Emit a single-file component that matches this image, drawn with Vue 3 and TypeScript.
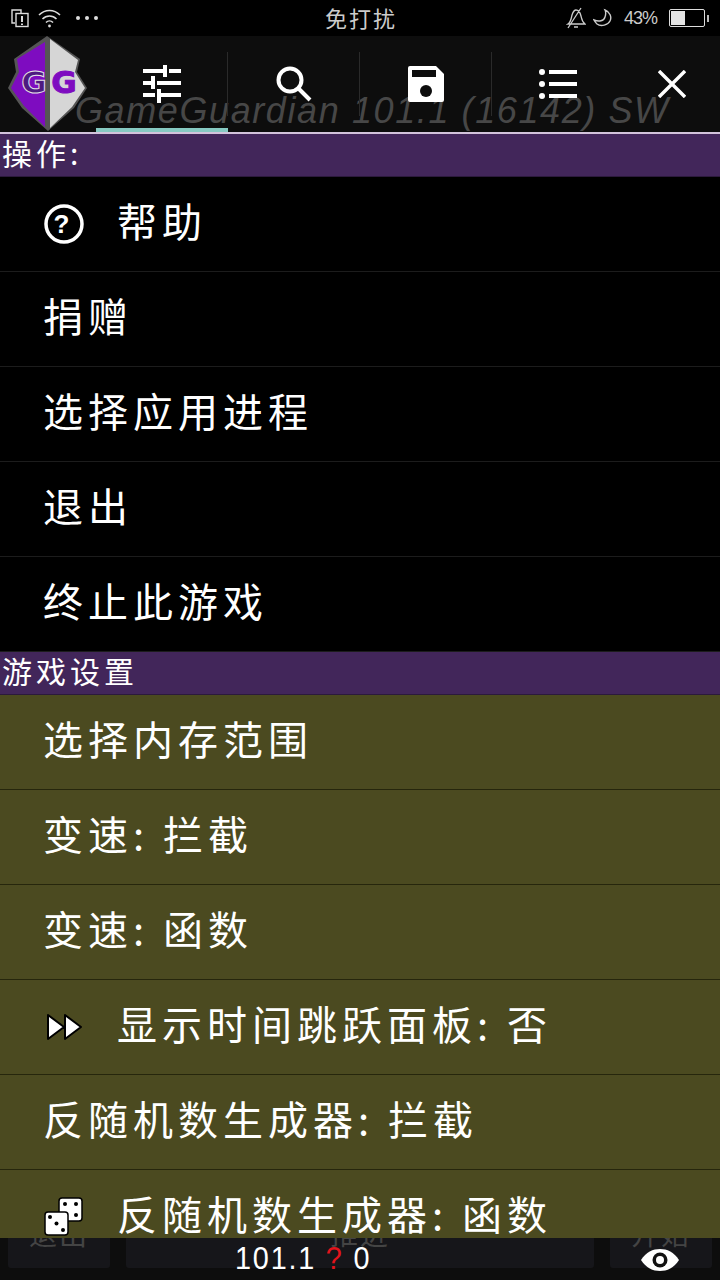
<script setup lang="ts">
interface MenuRow {
  label: string
  icon?: 'help' | 'skip' | 'dice'
}

const actions: MenuRow[] = [
  { label: '帮助', icon: 'help' },
  { label: '捐赠' },
  { label: '选择应用进程' },
  { label: '退出' },
  { label: '终止此游戏' }
]

const settings: MenuRow[] = [
  { label: '选择内存范围' },
  { label: '变速: 拦截' },
  { label: '变速: 函数' },
  { label: '显示时间跳跃面板: 否', icon: 'skip' },
  { label: '反随机数生成器: 拦截' },
  { label: '反随机数生成器: 函数', icon: 'dice' }
]
</script>

<template>
  <div class="screen">
    <!-- status bar -->
    <div class="status">
      <div class="status-left">
        <svg width="20" height="20" viewBox="0 0 20 20" fill="none" stroke="#ddd" stroke-width="1.4">
          <path d="M5 15H2V2h9v3" />
          <rect x="6" y="5.5" width="12" height="13" />
          <path d="M12 8v6M12 15.5v1.6" stroke-width="2" />
        </svg>
        <svg width="25" height="20" viewBox="0 0 25 20" fill="none" stroke="#ddd" stroke-width="1.6">
          <path d="M1 7c6-6 15-6 21 0M4.500 11c4-4 10-4 14 0M8 14.500c2-2 5-2 7 0" />
          <circle cx="11.500" cy="18" r="1.400" fill="#ddd" stroke="none" />
        </svg>
        <span class="dots"><i></i><i></i><i></i></span>
      </div>
      <div class="status-title">免打扰</div>
      <div class="status-right">
        <svg width="20" height="22" viewBox="0 0 20 22" fill="none" stroke="#ccc" stroke-width="1.3">
          <path d="M2 17c3-2 3-5 4-9 1-3 2-5 4-5s4 2 5 6 1 6 4 8zM8 20h4M2 21 15 1" />
        </svg>
        <svg width="20" height="20" viewBox="0 0 20 20" fill="none" stroke="#ccc" stroke-width="1.4">
          <path d="M12 2c5 2 7 7 5 11-2 4-9 6-13 3-1-1-2-2-3-4 5 2 10 1 11-3 1-3 1-5 0-7z" />
        </svg>
        <span class="pct">43%</span>
        <div class="battery"><span class="battery-level"></span></div>
        <span class="battery-tip"></span>
      </div>
    </div>

    <!-- toolbar -->
    <div class="toolbar">
      <div class="watermark">GameGuardian 101.1 (16142) SW</div>
      <div class="logo">
        <svg width="96" height="96" viewBox="0 0 96 96">
          <path d="M47 0 80 23 77 36 87 52 74 72 48 95 22 72 8 52 16 36 14 23z" fill="#555" />
          <path d="M45 6V91L24 70 11 52 19 36 17 23z" fill="#7e0cc0" />
          <path d="M50 3 78 24 75 36 85 52 72 71 50 92z" fill="#d6d6d6" />
          <text x="34" y="57" class="logo-g g-left">G</text>
          <text x="64" y="57" class="logo-g g-right">G</text>
        </svg>
      </div>
      <div class="tab active">
        <svg width="38" height="38" viewBox="0 0 38 38" fill="#fff">
          <path d="M0 4h20v4H0zM26 4h12v4H26zM24 0v12h-4V0zM0 16h8v4H0zM14 16h24v4H14zM12 11v13H8V11zM0 28h12v4H0zM16 28h22v4H16zM18 24v14h-4V24z" />
        </svg>
      </div>
      <div class="tab">
        <svg width="38" height="38" viewBox="0 0 38 38" fill="none" stroke="#fff" stroke-width="4">
          <circle cx="15" cy="15" r="11.500" />
          <path d="M23.500 23.500 35 35" />
        </svg>
      </div>
      <div class="tab">
        <svg width="38" height="38" viewBox="0 0 38 38">
          <path d="M3 1h26l8 8v26a2 2 0 0 1-2 2H3a2 2 0 0 1-2-2V3a2 2 0 0 1 2-2z" fill="#fff" />
          <rect x="5" y="5" width="24" height="7" fill="#0d0d0d" />
          <circle cx="19" cy="26" r="6" fill="#0d0d0d" />
        </svg>
      </div>
      <div class="tab">
        <svg width="38" height="32" viewBox="0 0 38 32" fill="#fff">
          <circle cx="3" cy="4" r="3" /><circle cx="3" cy="16" r="3" /><circle cx="3" cy="28" r="3" />
          <rect x="10" y="2" width="28" height="4" /><rect x="10" y="14" width="28" height="4" /><rect x="10" y="26" width="28" height="4" />
        </svg>
      </div>
      <div class="tab last">
        <svg width="28" height="28" viewBox="0 0 28 28" stroke="#fff" stroke-width="3.400" fill="none">
          <path d="M1 1 27 27M27 1 1 27" />
        </svg>
      </div>
    </div>

    <!-- menu -->
    <div class="content">
      <div class="section">操作:</div>
      <div v-for="row in actions" :key="row.label" class="row">
        <svg v-if="row.icon === 'help'" class="row-icon" width="40" height="40" viewBox="0 0 40 40">
          <circle cx="20" cy="20" r="18" fill="none" stroke="#fff" stroke-width="3.500" />
          <text x="20" y="29" class="help-mark">?</text>
        </svg>
        <span class="row-label">{{ row.label }}</span>
      </div>

      <div class="section">游戏设置</div>
      <div v-for="row in settings" :key="row.label" class="row olive">
        <svg v-if="row.icon === 'skip'" class="row-icon" width="40" height="30" viewBox="0 0 40 30">
          <path d="M4 3 20 15 4 27zM21 3 37 15 21 27z" fill="#fff" stroke="#000" stroke-width="2" stroke-linejoin="round" />
        </svg>
        <svg v-else-if="row.icon === 'dice'" class="row-icon" width="40" height="40" viewBox="0 0 40 40">
          <rect x="15" y="1" width="23" height="23" rx="3" fill="#fff" stroke="#000" stroke-width="1.500" />
          <circle cx="21" cy="7" r="2" /><circle cx="32" cy="7" r="2" /><circle cx="32" cy="18" r="2" />
          <rect x="1" y="15" width="23" height="23" rx="3" fill="#fff" stroke="#000" stroke-width="1.500" />
          <circle cx="6" cy="20" r="2" /><circle cx="12.500" cy="26.500" r="2" /><circle cx="19" cy="33" r="2" />
        </svg>
        <span class="row-label">{{ row.label }}</span>
      </div>
    </div>

    <!-- bottom bar, the menu panel covers the upper part of the buttons -->
    <div class="bottom">
      <div class="bottom-btn side"><span class="btn-label">退出</span></div>
      <div class="bottom-btn middle">
        <span class="btn-label">推进</span>
        <div class="speed">101.1 <b>?</b> 0</div>
      </div>
      <div class="bottom-btn side">
        <span class="btn-label">开始</span>
        <svg class="eye" width="38" height="24" viewBox="0 0 38 24">
          <path d="M0 12C5 4 12 1 19 1s14 3 19 11c-5 8-12 11-19 11S5 20 0 12z" fill="#fff" />
          <circle cx="19" cy="12" r="7.500" fill="#111" />
          <circle cx="19" cy="12" r="4" fill="#fff" />
        </svg>
      </div>
    </div>
  </div>
</template>

<style scoped>
.screen {
  width: 720px;
  height: 1280px;
  display: flex;
  flex-direction: column;
  overflow: hidden;
  background: #000;
  color: #fff;
  font-family: "Noto Sans CJK SC", "Noto Sans", sans-serif;
}

.status {
  height: 36px;
  flex: none;
  display: flex;
  align-items: center;
  justify-content: space-between;
  padding: 0 11px 0 10px;
  position: relative;
}

.status-left {
  display: flex;
  align-items: center;
  gap: 8px;
}

.dots {
  display: flex;
  gap: 5px;
  margin-left: 5px;
}

.dots i {
  width: 4px;
  height: 4px;
  border-radius: 50%;
  background: #ddd;
}

.status-title {
  position: absolute;
  left: 325px;
  top: 0;
  line-height: 34px;
  font-size: 22px;
  letter-spacing: 2px;
  color: #ccc;
}

.status-right {
  display: flex;
  align-items: center;
  gap: 7px;
}

.pct {
  font-size: 18px;
  letter-spacing: -1px;
  color: #ccc;
  font-family: "Liberation Sans", sans-serif;
  margin: 0 5px 0 4px;
}

.battery {
  width: 36px;
  height: 18px;
  border: 1px solid #ddd;
  border-radius: 2px;
  padding: 1px;
  box-sizing: border-box;
}

.battery-level {
  display: block;
  width: 14px;
  height: 14px;
  background: #e4e4e4;
}

.battery-tip {
  width: 2px;
  height: 7px;
  margin-left: -5px;
  background: #bbb;
}

.toolbar {
  height: 96px;
  flex: none;
  display: flex;
  background: #0d0d0d;
  position: relative;
}

.watermark {
  position: absolute;
  left: 75px;
  top: 54px;
  font-family: "Liberation Sans", sans-serif;
  font-style: italic;
  font-size: 36px;
  line-height: 42px;
  letter-spacing: 1.600px;
  white-space: nowrap;
  color: #474747;
}

.logo {
  width: 96px;
  flex: none;
  position: relative;
}

.logo-g {
  font-family: "DejaVu Sans", sans-serif;
  font-weight: 700;
  font-size: 31px;
  text-anchor: middle;
  stroke-width: 1px;
}

.g-left {
  fill: #4d1a80;
  stroke: #e4e4e4;
}

.g-right {
  fill: #7e0cc0;
  stroke: #7e0cc0;
}

.tab {
  width: 132px;
  flex: none;
  height: 96px;
  box-sizing: border-box;
  display: flex;
  align-items: center;
  justify-content: center;
  position: relative;
}

.tab::after {
  content: "";
  position: absolute;
  right: 0;
  top: 16px;
  height: 64px;
  width: 1px;
  background: #2a2a2a;
}

.tab.last {
  width: 96px;
}

.tab:nth-last-child(2)::after,
.tab.last::after {
  display: none;
}

.tab.active {
  border-bottom: 4px solid #86c9c2;
  padding-top: 4px;
}

.content {
  flex: 1;
  min-height: 0;
  overflow: hidden;
  border-top: 2px solid #d3c3dc;
}

.section {
  height: 42px;
  line-height: 37px;
  padding-left: 2px;
  font-size: 30px;
  letter-spacing: 4px;
  background: #42265a;
  border-bottom: 1px solid #2c1a3c;
}

.row {
  height: 94px;
  display: flex;
  align-items: center;
  gap: 33px;
  padding-left: 43px;
  font-size: 40px;
  letter-spacing: 5px;
  background: #000;
  border-bottom: 1px solid #1c1c1c;
}

.row.olive {
  background: #4b4a20;
  border-bottom-color: #26260c;
}

.row-label {
  margin-bottom: 8px;
}

.row-icon {
  flex: none;
  margin-left: 1px;
}

.help-mark {
  font-family: "Liberation Sans", sans-serif;
  font-weight: 700;
  font-size: 26px;
  text-anchor: middle;
  fill: #fff;
}

.bottom {
  height: 42px;
  flex: none;
  display: flex;
  gap: 16px;
  padding: 0 8px 12px;
  box-sizing: border-box;
  background: #0d0d0d;
}

.bottom-btn {
  height: 30px;
  background: #16161a;
  border-radius: 0 0 3px 3px;
  position: relative;
  text-align: center;
}

.side {
  width: 102px;
}

.middle {
  flex: 1;
}

.btn-label {
  position: absolute;
  left: 0;
  right: 0;
  top: -20px;
  font-size: 28px;
  line-height: 30px;
  letter-spacing: 2px;
  color: #444;
  clip-path: inset(20px 0 0 0);
}

.speed {
  position: absolute;
  left: 109px;
  top: 3px;
  font-family: "Liberation Sans", sans-serif;
  font-size: 32px;
  line-height: 34px;
  letter-spacing: 2px;
  white-space: nowrap;
  transform: scaleX(0.9);
  transform-origin: left;
}

.speed b {
  color: #e3141c;
  font-weight: 400;
}

.eye {
  position: absolute;
  left: 31px;
  top: 10px;
}
</style>
